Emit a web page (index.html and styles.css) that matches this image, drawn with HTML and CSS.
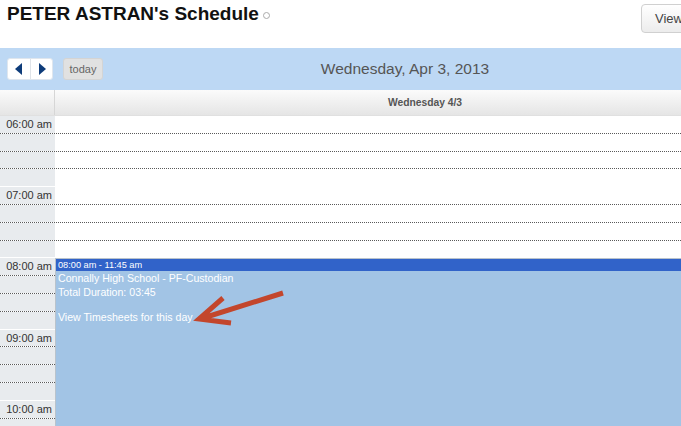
FILE: index.html
```html
<!DOCTYPE html>
<html lang="en">
<head>
    <meta charset="UTF-8" />
    <meta name="viewport" content="width=device-width, initial-scale=1.0" />
    <title>Schedule</title>
    <link rel="stylesheet" href="styles.css">
</head>
<body>
    <div class="page">
        <header class="top">
            <h1>PETER ASTRAN's Schedule <span class="status"></span></h1>
            <button class="view-btn">View</button>
        </header>

        <div class="toolbar">
            <div class="left">
                <div class="nav">
                    <button class="nav-btn" title="Previous">
                        <svg width="8" height="12" viewBox="0 0 8 12"><path d="M7 0 L0 6 L7 12 Z" fill="#0e3c7a"/></svg>
                    </button>
                    <button class="nav-btn" title="Next">
                        <svg width="8" height="12" viewBox="0 0 8 12"><path d="M1 0 L8 6 L1 12 Z" fill="#0e3c7a"/></svg>
                    </button>
                </div>
                <button class="today">today</button>
            </div>
            <h2 class="date-title">Wednesday, Apr 3, 2013</h2>
            <div></div>
        </div>

        <div class="calendar">
            <div class="cal-head">
                <div class="gutter-head"></div>
                <div class="day-head">Wednesday 4/3</div>
            </div>

            <div class="cal-body">
                <div class="slot"><div class="time">06:00 am</div><div class="cell"></div></div>
                <div class="slot"><div class="time"></div><div class="cell"></div></div>
                <div class="slot"><div class="time"></div><div class="cell"></div></div>
                <div class="slot hour-end"><div class="time"></div><div class="cell"></div></div>

                <div class="slot"><div class="time">07:00 am</div><div class="cell"></div></div>
                <div class="slot"><div class="time"></div><div class="cell"></div></div>
                <div class="slot"><div class="time"></div><div class="cell"></div></div>
                <div class="slot hour-end"><div class="time"></div><div class="cell"></div></div>

                <div class="slot"><div class="time">08:00 am</div><div class="cell"></div></div>
                <div class="slot"><div class="time"></div><div class="cell"></div></div>
                <div class="slot"><div class="time"></div><div class="cell"></div></div>
                <div class="slot hour-end"><div class="time"></div><div class="cell"></div></div>

                <div class="slot"><div class="time">09:00 am</div><div class="cell"></div></div>
                <div class="slot"><div class="time"></div><div class="cell"></div></div>
                <div class="slot"><div class="time"></div><div class="cell"></div></div>
                <div class="slot hour-end"><div class="time"></div><div class="cell"></div></div>

                <div class="slot"><div class="time">10:00 am</div><div class="cell"></div></div>
                <div class="slot"><div class="time"></div><div class="cell"></div></div>
                <div class="slot"><div class="time"></div><div class="cell"></div></div>
                <div class="slot hour-end"><div class="time"></div><div class="cell"></div></div>

                <!-- event placed by its start time: 08:00 -->
                <div class="event">
                    <div class="event-time">08:00 am - 11:45 am</div>
                    <div class="event-body">
                        <div>Connally High School - PF-Custodian</div>
                        <div>Total Duration: 03:45</div>
                        <a class="event-link" href="#">View Timesheets for this day</a>
                    </div>
                </div>

                <svg class="arrow" width="100" height="45" viewBox="0 0 100 45">
                    <path d="M93 8 L10 34 M33 13 L9 34 L41 38" fill="none" stroke="#c3462c" stroke-width="5" stroke-linejoin="miter" />
                </svg>
            </div>
        </div>
    </div>
</body>
</html>
```

FILE: styles.css
```css
* {
  box-sizing: border-box;
}

body {
  margin: 0;
  font-family: 'Liberation Sans', Arial, sans-serif;
  color: #333;
  background-color: #fff;
  overflow: hidden;
}

.page {
  width: 810px;
}

/* Title row */
.top {
  display: flex;
  align-items: flex-start;
  height: 48px;
  padding: 3px 0 0 7px;
}

.top h1 {
  margin: 0;
  display: flex;
  align-items: center;
  gap: 4px;
  font-size: 19px;
  line-height: 22px;
  font-weight: bold;
  color: #111;
}

.status {
  width: 7px;
  height: 7px;
  margin-top: 3px;
  border: 1px solid #aaa;
  border-radius: 50%;
}

.view-btn {
  margin-left: auto;
  margin-top: 1px;
  width: 169px;
  height: 29px;
  padding: 0 0 0 13px;
  text-align: left;
  font-family: inherit;
  font-size: 13px;
  color: #444;
  background: linear-gradient(#fff, #ececec);
  border: 1px solid #d0d0d0;
  border-radius: 4px;
}

/* Blue toolbar */
.toolbar {
  display: grid;
  grid-template-columns: 1fr auto 1fr;
  align-items: center;
  height: 42px;
  padding: 0 7px;
  background-color: #bdd8f4;
}

.toolbar .left {
  display: flex;
  align-items: center;
  gap: 10px;
}

.nav {
  display: flex;
  height: 22px;
  background-color: #fff;
  border: 1px solid #dfe6ee;
  border-radius: 3px;
}

.nav-btn {
  width: 22px;
  height: 20px;
  padding: 0;
  border: none;
  background: none;
  display: flex;
  align-items: center;
  justify-content: center;
}

.nav-btn + .nav-btn {
  border-left: 1px solid #dfe3e8;
}

.today {
  height: 22px;
  width: 40px;
  padding: 0;
  font-family: inherit;
  font-size: 11px;
  color: #666;
  background-color: #e1e1e1;
  border: 1px solid #d4d4d4;
  border-radius: 3px;
}

.date-title {
  margin: 0;
  font-size: 15.5px;
  font-weight: normal;
  color: #555;
}

/* Calendar */
.calendar {
  width: 795px;
}

.cal-head {
  display: flex;
  height: 26px;
  background: linear-gradient(#fbfbfb, #e5e5e5);
  border-bottom: 1px solid #e0e0e0;
}

.gutter-head {
  width: 55px;
  border-right: 1px solid #d6d6d6;
}

.day-head {
  flex: 1;
  display: flex;
  align-items: center;
  justify-content: center;
  font-size: 10.3px;
  font-weight: bold;
  color: #555;
}

.cal-body {
  position: relative;
}

.slot {
  display: flex;
  height: 17.8px;
  border-bottom: 1px dotted #5a5a5a;
}

.slot.hour-end {
  border-bottom-color: transparent;
}

.time {
  width: 55px;
  padding-right: 3px;
  background-color: #e8ebee;
  text-align: right;
  font-size: 11px;
  line-height: 17px;
  color: #333;
}

.cell {
  flex: 1;
}

.event {
  position: absolute;
  top: 142px;
  left: 55px;
  right: 0;
  height: 409px;
  border: 1px solid #b9c3cc;
  background-color: #a2c4e5;
  color: #fff;
}

.event-time {
  height: 12px;
  padding-left: 2px;
  font-size: 9.2px;
  line-height: 12px;
  color: #fff;
  background-color: #3163c9;
}

.event-body {
  padding-left: 2px;
  font-size: 10.6px;
  line-height: 14px;
}

.event-link {
  display: block;
  margin-top: 11px;
  color: #fff;
  text-decoration: none;
}

.arrow {
  position: absolute;
  left: 190px;
  top: 169px;
}
```
